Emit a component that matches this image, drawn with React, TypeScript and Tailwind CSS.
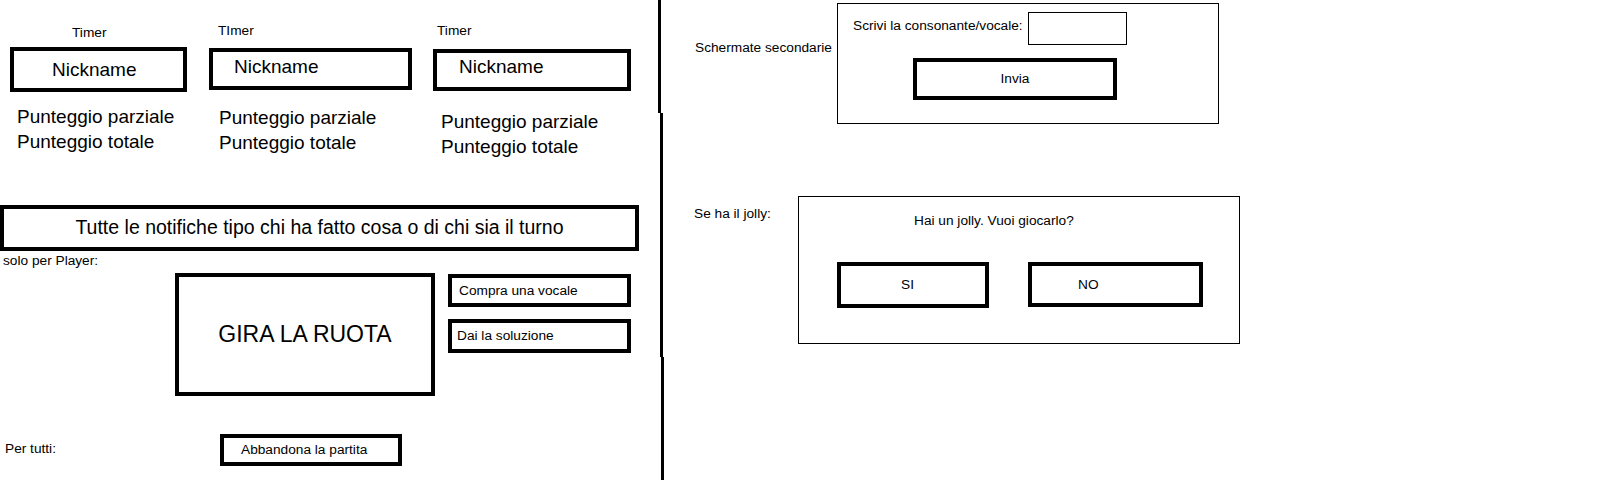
const players = [
  {
    timer: "Timer",
    colCls: "ml-[10px] w-[177px]",
    timerCls: "ml-[62px] mt-[26px]",
    boxCls: "mt-[7px] h-[45px] pt-[9px] pl-[38px]",
    scoreCls: "ml-[7px] mt-[12px]",
  },
  {
    timer: "TImer",
    colCls: "ml-[22px] w-[203px]",
    timerCls: "ml-[9px] mt-[24px]",
    boxCls: "mt-[10px] h-[42px] pt-[5px] pl-[21px]",
    scoreCls: "ml-[10px] mt-[15px]",
  },
  {
    timer: "Timer",
    colCls: "ml-[21px] w-[198px]",
    timerCls: "ml-[4px] mt-[24px]",
    boxCls: "mt-[11px] h-[42px] pt-[4px] pl-[22px]",
    scoreCls: "ml-[8px] mt-[18px]",
  },
];

const PlayerColumn = ({ p }: { p: (typeof players)[number] }) => (
  <div className={`flex flex-col ${p.colCls}`}>
    <div className={`text-[13.7px] leading-[14px] ${p.timerCls}`}>{p.timer}</div>
    <div className={`w-full border-4 border-black text-[19px] leading-none ${p.boxCls}`}>
      Nickname
    </div>
    <div className={`text-[19px] leading-[25px] ${p.scoreCls}`}>
      <div>Punteggio parziale</div>
      <div>Punteggio totale</div>
    </div>
  </div>
);

const App = () => {
  return (
    <div className="w-[1619px] h-[480px] bg-white text-black flex overflow-hidden font-['Liberation_Sans',Arial,sans-serif]">
      {/* left: main game screen */}
      <div className="w-[658px] flex flex-col">
        <div className="flex items-start h-[159px]">
          {players.map((p, i) => (
            <PlayerColumn key={i} p={p} />
          ))}
        </div>

        <div className="mt-[46px] w-[639px] h-[46px] border-4 border-black flex items-center justify-center text-[19.5px] leading-none">
          Tutte le notifiche tipo chi ha fatto cosa o di chi sia il turno
        </div>

        <div className="mt-[3px] ml-[3px] text-[13.7px] leading-[14px]">solo per Player:</div>

        <div className="mt-[5px] flex items-start">
          <div className="ml-[175px] w-[260px] h-[123px] border-4 border-black flex items-center justify-center text-[23px] leading-none">
            GIRA LA RUOTA
          </div>
          <div className="ml-[13px] mt-[1px] flex flex-col gap-[12px] text-[13.7px] leading-none">
            <div className="w-[183px] h-[33px] border-4 border-black flex items-center pl-[7px]">
              Compra una vocale
            </div>
            <div className="w-[183px] h-[34px] border-4 border-black flex items-center pl-[5px]">
              Dai la soluzione
            </div>
          </div>
        </div>

        <div className="mt-[38px] flex items-start text-[13.7px]">
          <div className="w-[220px] pl-[5px] pt-[8px] leading-[14px]">Per tutti:</div>
          <div className="w-[182px] h-[32px] border-4 border-black flex items-center pl-[17px] leading-none">
            Abbandona la partita
          </div>
        </div>
      </div>

      {/* divider */}
      <div className="w-[6px] flex flex-col">
        <div className="w-[3px] h-[113px] bg-black" />
        <div className="ml-[2px] w-[3px] h-[244px] bg-black" />
        <div className="ml-[3px] w-[3px] flex-1 bg-black" />
      </div>

      {/* right: secondary screens */}
      <div className="flex-1 flex flex-col text-[13.7px]">
        <div className="mt-[3px] flex items-start">
          <div className="w-[173px] pl-[31px] mt-[38px] leading-[14px]">Schermate secondarie</div>
          <div className="w-[382px] h-[121px] border border-black flex flex-col">
            <div className="flex items-start pl-[15px]">
              <div className="w-[175px] mt-[15px] leading-[14px]">Scrivi la consonante/vocale:</div>
              <div className="mt-[8px] w-[99px] h-[33px] border border-black" />
            </div>
            <div className="mt-[13px] ml-[75px] w-[204px] h-[42px] border-4 border-black flex items-center justify-center leading-none">
              Invia
            </div>
          </div>
        </div>

        <div className="mt-[72px] flex items-start">
          <div className="w-[134px] pl-[30px] mt-[11px] leading-[14px]">Se ha il jolly:</div>
          <div className="w-[442px] h-[148px] border border-black flex flex-col">
            <div className="ml-[115px] mt-[17px] leading-[14px]">Hai un jolly. Vuoi giocarlo?</div>
            <div className="mt-[34px] ml-[38px] flex items-start gap-[39px] leading-none">
              <div className="w-[152px] h-[46px] border-4 border-black flex items-center pl-[60px]">SI</div>
              <div className="w-[175px] h-[45px] border-4 border-black flex items-center pl-[46px]">NO</div>
            </div>
          </div>
        </div>
      </div>
    </div>
  );
};

export default App;
